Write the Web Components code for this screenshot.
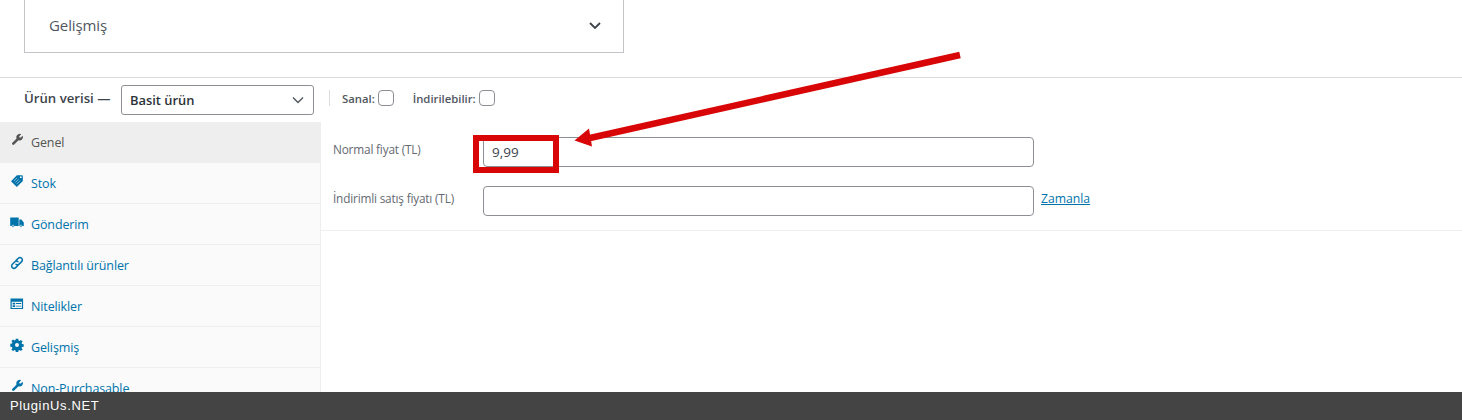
<!DOCTYPE html>
<html lang="tr"><head><meta charset="utf-8"><title>Ürün verisi</title>
<style>
html,body{margin:0;padding:0;background:#fff}
body{font-family:"Open Sans","Noto Sans",sans-serif;overflow:hidden}
</style></head><body>
<product-page>
  <fold-card slot="card" label="Gelişmiş"></fold-card>
  <data-toolbar slot="toolbar"></data-toolbar>
  <side-tabs slot="tabs">
    <side-tab active icon="wrench" label="Genel"></side-tab>
    <side-tab icon="tag" label="Stok"></side-tab>
    <side-tab icon="truck" label="Gönderim"></side-tab>
    <side-tab icon="link" label="Bağlantılı ürünler"></side-tab>
    <side-tab icon="table" label="Nitelikler"></side-tab>
    <side-tab icon="gear" label="Gelişmiş"></side-tab>
    <side-tab icon="wrench" label="Non-Purchasable"></side-tab>
  </side-tabs>
  <price-panel slot="panel"></price-panel>
  <site-footer slot="footer">PluginUs.NET</site-footer>
</product-page>
<script>
const def=(name,html)=>customElements.define(name,class extends HTMLElement{
  constructor(){super();this.attachShadow({mode:'open'}).innerHTML=typeof html==='function'?html(this):html;}
});
const ICONS={
 wrench:'<path d="M3.300 10.700 7.800 6.200" stroke="currentColor" stroke-width="2.600" stroke-linecap="round" fill="none"/><path d="M12.600 2.800 10.800 4.600 9.400 4.400 9.300 3.200 11.200 1.300A3.300 3.300 0 1 0 12.600 2.800z" fill="currentColor"/>',
 tag:'<path d="M6.900 1.200 1 7.200l5.800 5.800 6-6V2.400c0-.7-.5-1.200-1.200-1.200z" fill="currentColor"/><path d="M3.800 7 7 3.800M5.300 8.500l3.200-3.200M6.800 10l3.200-3.200" stroke="#bcd9e8" stroke-width=".7" fill="none"/><circle cx="10.800" cy="3.200" r=".9" fill="#fff"/>',
 truck:'<path d="M.2 2.400h8.500v8.500H.2zM9.300 4.600h2.100l2.400 2.800v3.500H9.300z" fill="currentColor"/><circle cx="3" cy="11.200" r="1.100" fill="currentColor" stroke="#fafafa" stroke-width=".6"/><circle cx="11" cy="11.200" r="1.100" fill="currentColor" stroke="#fafafa" stroke-width=".6"/>',
 link:'<g fill="none" stroke="currentColor" stroke-width="1.500" stroke-linecap="round"><path d="M6.200 4.400 8.300 2.300c1-1 2.300-1 3.300 0s1 2.300 0 3.300L9.100 8.100c-1 1-2.200 1-3.100.1"/><path d="M7.800 9.500 5.700 11.600c-1 1-2.300 1-3.300 0s-1-2.300 0-3.300l2.500-2.500c1-1 2.200-1 3.100-.1"/></g>',
 table:'<path fill-rule="evenodd" d="M.5 1.500h12.600v10.600H.5zM1.700 4.800v6.100h10.200V4.800zM2.600 5.700h2.600v1.700H2.600zM2.600 8.300h2.600V10H2.600zM6 6.100h5.200V7H6zM6 8.700h5.200v.9H6z" fill="currentColor"/>',
 gear:'<path fill-rule="evenodd" d="M5.800.8h2.400l.3 1.700 1 .4 1.400-1 1.700 1.700-1 1.400.4 1 1.700.3v2.400l-1.700.3-.4 1 1 1.400-1.700 1.700-1.400-1-1 .4-.3 1.700H5.800l-.3-1.700-1-.4-1.400 1-1.700-1.700 1-1.400-.4-1-1.700-.3V5.800l1.700-.3.4-1-1-1.400 1.700-1.700 1.400 1 1-.4zM7 5a2 2 0 1 0 0 4 2 2 0 0 0 0-4z" fill="currentColor"/>'
};
def('product-page',`<style>
:host{display:flex;flex-direction:column;width:1462px;height:420px;position:relative;overflow:hidden;background:#fff}
.main{flex:1;min-height:0;overflow:hidden;display:flex;flex-direction:column}
.box{flex:1;min-height:0;display:flex;flex-direction:column;border-top:1px solid #dcdcde;margin-top:24px}
.cols{flex:1;min-height:0;display:flex}
.over{position:absolute;left:0;top:0;pointer-events:none}
</style>
<div class="main">
  <slot name="card"></slot>
  <div class="box"><slot name="toolbar"></slot>
    <div class="cols"><slot name="tabs"></slot><slot name="panel"></slot></div>
  </div>
</div>
<slot name="footer"></slot>
<svg class="over" width="1462" height="420" viewBox="0 0 1462 420" aria-hidden="true">
  <rect x="476" y="138" width="80" height="32" fill="none" stroke="#d80606" stroke-width="6"/>
  <path d="M960 55 585.500 139" fill="none" stroke="#d80606" stroke-width="6.500"/>
  <path d="M574.500 140.500 589 128.500 592 146.500z" fill="#d80606"/>
</svg>`);
def('fold-card',h=>`<style>
:host{display:flex;align-items:center;justify-content:space-between;box-sizing:border-box;width:600px;height:53px;margin-left:24px;padding:0 20px 0 24px;border:1px solid #c3c4c7;border-top:0;color:#50575e;font-size:15px;letter-spacing:-.1px}
span{position:relative;top:-1px}
svg{display:block}
</style><span>${h.getAttribute('label')}</span>
<svg width="16" height="16" viewBox="0 0 16 16"><path d="M3 5l5 5 5-5" fill="none" stroke="#3c434a" stroke-width="1.800"/></svg>`);
def('data-toolbar',`<style>
:host{display:flex;align-items:center;height:44px;padding-left:24px;box-sizing:border-box;font-size:13px;color:#3c434a}
b{font-weight:600;white-space:nowrap}
.t{font-size:13.200px;width:97px;position:relative;top:-2px}
.sel{box-sizing:border-box;width:193px;height:30px;border:1px solid #8c8f94;border-radius:3px;display:flex;align-items:center;justify-content:space-between;padding:0 8px;font-weight:600;font-size:12.900px;color:#2c3338;background:#fff}
.sep{width:1px;height:16px;background:#dcdcde;margin:0 12px 4px 15px}
label{display:flex;align-items:center;font-size:11.300px;font-weight:600;color:#50575e;margin:0 19px 4px 0}
i{display:block;box-sizing:border-box;width:16px;height:16px;border:1px solid #8c8f94;border-radius:4px;background:#fff;margin-left:3px}
</style><b class="t">Ürün verisi —</b>
<div class="sel" role="combobox"><span>Basit ürün</span><svg width="14" height="14" viewBox="0 0 14 14"><path d="M2 4.500l5 5 5-5" fill="none" stroke="#50575e" stroke-width="1.400"/></svg></div>
<div class="sep"></div>
<label>Sanal:<i></i></label><label>İndirilebilir:<i></i></label>`);
def('side-tabs',`<style>
:host{display:block;box-sizing:border-box;width:321px;flex:none;background:#fafafa;border-right:1px solid #eee;overflow:hidden}
</style><slot></slot>`);
def('side-tab',h=>{const a=h.hasAttribute('active');return `<style>
:host{display:flex;align-items:center;box-sizing:border-box;height:41px;padding:0 0 0 10px;border-bottom:1px solid #eee;font-size:12.500px;letter-spacing:-.13px;color:${a?'#555':'#0073aa'};background:${a?'#eee':'transparent'}}
svg{flex:none;width:14px;height:14px;margin-right:7px;position:relative;top:-2px}
</style><svg viewBox="0 0 14 14">${ICONS[h.getAttribute('icon')]}</svg><span>${h.getAttribute('label')}</span>`});
def('price-row',h=>`<style>
:host{display:flex;align-items:center;height:30px;font-size:11.800px;letter-spacing:-.18px;color:#646970}
.l{width:150px;flex:none;position:relative;top:-3px}
.i{box-sizing:border-box;width:551px;height:30px;border:1px solid #8c8f94;border-radius:4px;padding:0 8px;display:flex;align-items:center;font-size:13.500px;letter-spacing:0;color:#3c434a;background:#fff}
a{margin-left:7px;color:#0073aa;text-decoration:underline;font-size:12.200px;letter-spacing:0;position:relative;top:-3px}
</style><span class="l">${h.getAttribute('label')}</span><div class="i" role="textbox">${h.getAttribute('value')||''}</div>${h.hasAttribute('link')?`<a href="#">${h.getAttribute('link')}</a>`:''}`);
def('price-panel',`<style>
:host{display:block;flex:1;min-width:0}
.g{display:flex;flex-direction:column;gap:19px;box-sizing:border-box;height:109px;padding:15px 0 0 12px;border-bottom:1px solid #eee}
</style><div class="g"><price-row label="Normal fiyat (TL)" value="9,99"></price-row><price-row label="İndirimli satış fiyatı (TL)" link="Zamanla"></price-row></div>`);
def('site-footer',`<style>
:host{display:flex;align-items:center;box-sizing:border-box;flex:none;height:28px;background:#444;color:#fff;padding:0 0 1px 10px;font:13px "Liberation Sans",sans-serif;letter-spacing:.65px;position:relative;z-index:1}
</style><slot></slot>`);
</script>
</body></html>
